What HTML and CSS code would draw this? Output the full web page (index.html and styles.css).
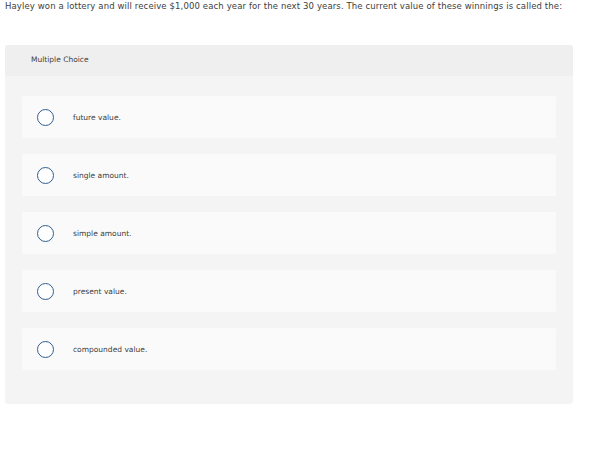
FILE: index.html
```html
<!DOCTYPE html>
<html>
<head>
<meta charset="utf-8">
<link rel="stylesheet" href="styles.css">
</head>
<body>
<p class="question">Hayley won a lottery and will receive $1,000 each year for the next 30 years. The current value of these winnings is called the:</p>
<section class="panel">
  <header class="panel-head">Multiple Choice</header>
  <div class="options">
    <label class="option"><span class="radio"></span><span class="label">future value.</span></label>
    <label class="option"><span class="radio"></span><span class="label">single amount.</span></label>
    <label class="option"><span class="radio"></span><span class="label">simple amount.</span></label>
    <label class="option"><span class="radio"></span><span class="label">present value.</span></label>
    <label class="option"><span class="radio"></span><span class="label">compounded value.</span></label>
  </div>
</section>
</body>
</html>
```

FILE: styles.css
```css
html, body {
  margin: 0;
  padding: 0;
  background: #ffffff;
}
body {
  font-family: "DejaVu Sans", Verdana, sans-serif;
  color: #3d3d3d;
  padding: 0 17px 0 5px;
}
.question {
  margin: 0;
  padding-top: 1px;
  font-size: 8.5px;
  line-height: 11px;
  letter-spacing: 0.12px;
  color: #404040;
  white-space: nowrap;
}
.panel {
  margin-top: 33px;
  background: #f4f4f4;
  border-radius: 3px;
  padding-bottom: 34px;
}
.panel-head {
  background: #efefef;
  border-radius: 3px 3px 0 0;
  height: 31px;
  box-sizing: border-box;
  padding: 9px 0 0 26px;
  font-size: 7.5px;
  line-height: 12px;
  color: #3d3d3d;
}
.options {
  display: flex;
  flex-direction: column;
  gap: 16px;
  padding: 20px 17px 0 17px;
}
.option {
  display: flex;
  align-items: center;
  height: 42px;
  background: #fafafa;
  border-radius: 3px;
  padding-left: 15px;
}
.radio {
  width: 15px;
  height: 15px;
  border: 1.5px solid #2f5f8f;
  border-radius: 50%;
  background: #ffffff;
  flex: none;
}
.label {
  margin-left: 19px;
  font-size: 7.5px;
  color: #3d3d3d;
}
```
